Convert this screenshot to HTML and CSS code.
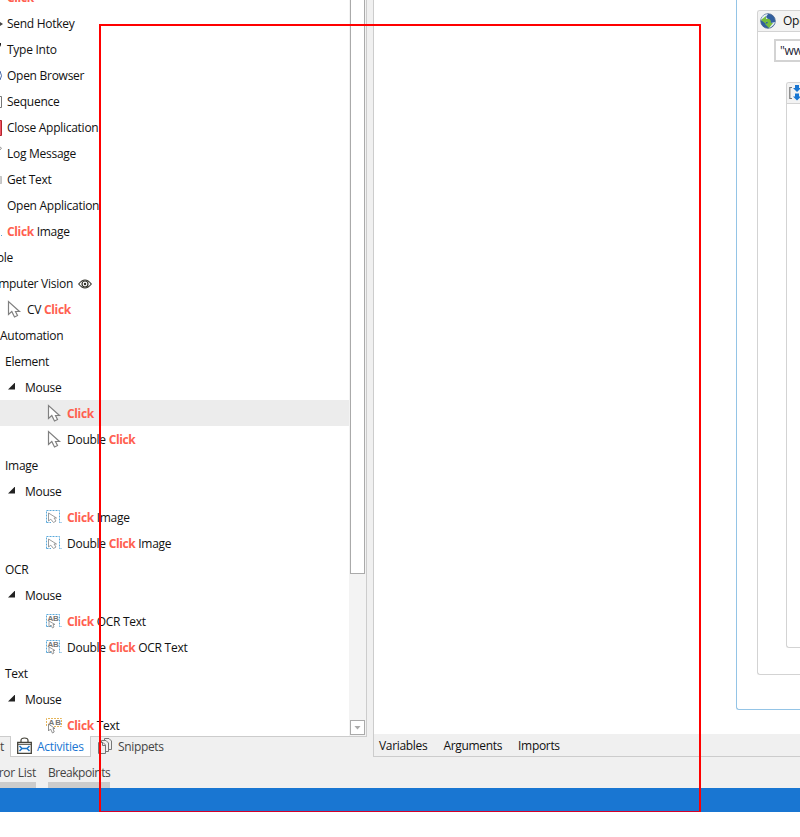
FILE: index.html
```html
<!DOCTYPE html>
<html lang="en">
<head>
<meta charset="utf-8">
<title>Activities</title>
<link rel="stylesheet" href="styles.css">
</head>
<body>
<svg class="defs" width="0" height="0" aria-hidden="true">
  <symbol id="cursor" viewBox="0 0 16 18"><path d="M2.5 1.5V14.5L5.8 11.5L8.5 17L11.5 15.5L9.5 11.5H13.5Z" fill="#fff" stroke="#808080" stroke-width="1.2"/></symbol>
  <symbol id="image" viewBox="0 0 16 18"><path d="M.5 14.5V2.5H13.5V14.5H16M.5 14.5H5" fill="none" stroke="#5aa9da" stroke-dasharray="2 1"/><path d="M2.5 5V13L4.8 11.2L7.5 14.5L10 13L8 10H10.5Z" fill="#fff" stroke="#929292" stroke-width=".9"/></symbol>
  <symbol id="ocr" viewBox="0 0 16 18"><path d="M.5 14.5V2.5H13.5V14.5H16M.5 14.5H5" fill="none" stroke="#5aa9da" stroke-dasharray="2 1"/><text x="1.5" y="9" class="ab">AB</text><path d="M3 9V15L5 13L6.5 16L8 15L7 12.5H9Z" fill="#fff" stroke="#929292" stroke-width=".9"/></symbol>
  <symbol id="text" viewBox="0 0 16 18"><path d="M.5 10V2.5H15.5V10.5H8" fill="none" stroke="#e5b559" stroke-dasharray="2 1"/><text x="2.5" y="9" class="ab wide">AB</text><path d="M2.5 8V15L4.5 13L6.5 17L8.2 16L7 12.5H9Z" fill="#fff" stroke="#858585" stroke-width=".9"/></symbol>
</svg>
<div class="app">
  <main class="work">
    <section class="side">
      <div class="panel">
        <div class="tree">
          <div class="row fav"><span class="ico"></span><b>Click</b></div>
          <div class="row fav"><svg class="ico" viewBox="0 0 7 16"><path d="M0 6L3 8L0 10Z" fill="#444"/></svg><span>Send Hotkey</span></div>
          <div class="row fav"><svg class="ico" viewBox="0 0 7 16"><path d="M0 1H1V3L0 5Z" fill="#222"/></svg><span>Type Into</span></div>
          <div class="row fav"><svg class="ico" viewBox="0 0 7 16"><path d="M0 3Q3 8 0 12" fill="none" stroke="#4668a8"/></svg><span>Open Browser</span></div>
          <div class="row fav"><svg class="ico" viewBox="0 0 7 16"><path d="M0 2.5H1.5V13.5H0" fill="none" stroke="#777"/></svg><span>Sequence</span></div>
          <div class="row fav"><svg class="ico" viewBox="0 0 7 16"><path d="M0 .5H1.5V15.5H0" fill="#ee5363" stroke="#b3252c"/></svg><span>Close Application</span></div>
          <div class="row fav"><svg class="ico" viewBox="0 0 7 16"><path d="M0 1L1.5 2L0 4" fill="none" stroke="#999"/></svg><span>Log Message</span></div>
          <div class="row fav"><svg class="ico" viewBox="0 0 7 16"><path d="M0 4.5H1.5V11.5H0" fill="#ccc" stroke="#c3c3c3"/></svg><span>Get Text</span></div>
          <div class="row fav"><span class="ico"></span><span>Open Application</span></div>
          <div class="row fav"><svg class="ico" viewBox="0 0 7 16"><path d="M1 11.5H2" stroke="#5aa9da"/></svg><span><b>Click</b> Image</span></div>
          <div class="row available"><span>ble</span></div>
          <div class="row vision"><span>Computer Vision</span><svg class="eye" viewBox="0 0 14 10"><path d="M.7 5Q7-3 13.3 5Q7 13 .7 5Z" fill="#fff" stroke="#33332b" stroke-width="1.2"/><circle cx="7" cy="5" r="3" fill="none" stroke="#33332b" stroke-width="1.2"/><circle cx="7" cy="5" r="1.2" fill="#33332b"/></svg></div>
          <div class="row cv"><svg class="tool"><use href="#cursor"/></svg><span>CV <b>Click</b></span></div>
          <div class="row root"><span>Automation</span></div>
          <div class="row group"><span>Element</span></div>
          <div class="row sub"><i class="caret"></i><span>Mouse</span></div>
          <div class="row leaf selected"><svg class="tool"><use href="#cursor"/></svg><b>Click</b></div>
          <div class="row leaf"><svg class="tool"><use href="#cursor"/></svg><span>Double <b>Click</b></span></div>
          <div class="row group"><span>Image</span></div>
          <div class="row sub"><i class="caret"></i><span>Mouse</span></div>
          <div class="row leaf"><svg class="tool"><use href="#image"/></svg><span><b>Click</b> Image</span></div>
          <div class="row leaf"><svg class="tool"><use href="#image"/></svg><span>Double <b>Click</b> Image</span></div>
          <div class="row group"><span>OCR</span></div>
          <div class="row sub"><i class="caret"></i><span>Mouse</span></div>
          <div class="row leaf"><svg class="tool"><use href="#ocr"/></svg><span><b>Click</b> OCR Text</span></div>
          <div class="row leaf"><svg class="tool"><use href="#ocr"/></svg><span>Double <b>Click</b> OCR Text</span></div>
          <div class="row group"><span>Text</span></div>
          <div class="row sub"><i class="caret"></i><span>Mouse</span></div>
          <div class="row leaf"><svg class="tool"><use href="#text"/></svg><span><b>Click</b> Text</span></div>
        </div>
        <div class="scroll"><div class="thumb"></div><div class="down"><i></i></div></div>
      </div>
      <nav class="tabs">
        <div class="tab first"><span>t</span></div>
        <div class="tab active"><svg class="bag" viewBox="0 0 15 17"><path d="M4 6V3.5Q4 1 7.5 1T11 3.5V6" fill="none" stroke="#45433a" stroke-width="1.2"/><path d="M.7 5.5H14.3V16.3H.7Z" fill="#fff" stroke="#45433a" stroke-width="1.3"/><path d="M1 7.5H14" stroke="#45433a" stroke-width=".8"/><path d="M2.5 9L5 11.5L2.5 14M12.5 9L10 11.5L12.5 14M5 11.5H10" fill="none" stroke="#1c75c8" stroke-width="1.5"/></svg><span>Activities</span></div>
        <div class="tab snip"><svg class="pages" viewBox="0 0 14 16"><g fill="#f0f0f0" stroke="#777"><path d="M6.5.5H11L13.5 3V11.5H6.5Z"/><path d="M3.5 2.5H8L10.5 5V13.5H3.5Z"/><path d="M.5 4.5H5L7.5 7V15.5H.5Z"/><path d="M4.5 5V7.5H7"/></g></svg><span>Snippets</span></div>
      </nav>
    </section>
    <section class="designer">
      <div class="canvas">
        <div class="flow">
          <div class="browser">
            <header class="head"><svg class="globe" viewBox="0 0 16 16"><circle cx="8" cy="8" r="7.3" fill="#315f9f" stroke="#48658f" stroke-width=".8"/><path d="M1 6Q3 1 8 1L6 4L9 7L6 9L5 7L2 8Z" fill="#e2edf4"/><path d="M9 15Q14 13 15 9L11 10Z" fill="#e2edf4"/><path d="M1 7L6 3V6Q11 5 11 10H13L9 15L5 11L8 10Q7 8 6 9V11Z" fill="#76bd3b"/></svg><span>Open Browser</span></header>
            <div class="url">"www.google.com"</div>
            <div class="do"><header class="head"><svg class="seq" viewBox="0 0 18 16"><path d="M3 2.5H.8V13.5H3" fill="none" stroke="#777" stroke-width="1.2"/><path d="M6 0H10V3H12L8 7L4 3H6ZM6 8.5H10V11.5H12L8 15.5L4 11.5H6Z" fill="#1976d2"/></svg></header></div>
          </div>
        </div>
      </div>
      <nav class="vars"><span>Variables</span><span>Arguments</span><span>Imports</span></nav>
    </section>
  </main>
  <div class="dock"><div class="errors"><span>Error List</span></div><div class="breaks"><span>Breakpoints</span></div></div>
  <footer class="status"></footer>
  <div class="marker"></div>
</div>
</body>
</html>
```

FILE: styles.css
```css
* { box-sizing: border-box; }
body { margin: 0; background: #fff; font: 12px/16px "Open Sans", "Noto Sans", sans-serif; letter-spacing: -.27px; color: #111; overflow: hidden; }
svg { display: block; flex: none; }
.defs { position: absolute; }
.app { position: relative; width: 800px; height: 812px; overflow: hidden; background: #f0f0f0; display: flex; flex-direction: column; }
.work { display: flex; height: 757px; gap: 6px; }
.side { width: 367px; flex: none; }
.panel { height: 737px; display: flex; border: solid #ccc; border-width: 0 1px 1px 0; background: #fff; overflow: hidden; }
.tree { flex: 1; min-width: 0; margin-top: -16px; }
.row { height: 26px; display: flex; align-items: center; white-space: pre; padding-top: 2px; }
.row span, .row b { flex: none; }
b { color: #ff604f; font-weight: 700; letter-spacing: -.36px; }
.ico { width: 7px; height: 16px; }
.available { width: 13px; justify-content: flex-end; }
.vision { width: 92px; justify-content: flex-end; gap: 5px; }
.eye { width: 14px; height: 10px; }
.tool { width: 16px; height: 18px; margin-right: 5px; margin-top: -2px; }
.cv { padding-left: 6px; }
.group { padding-left: 5px; }
.sub { padding-left: 8px; }
.caret { width: 7px; height: 7px; margin: -4px 10px 0 0; background: #222; clip-path: polygon(100% 0, 100% 100%, 0 100%); }
.leaf { padding-left: 46px; }
.selected { background: #ececec; }
.scroll { width: 17px; background: #f3f3f3; padding: 0 1px 1px; display: flex; flex-direction: column; justify-content: space-between; }
.thumb { width: 15px; height: 574px; background: #fff; border: 1px solid #aaa; border-top: 0; }
.down { width: 15px; height: 15px; background: #fff; border: 1px solid #aaa; display: grid; place-items: center; }
.down i { width: 7px; height: 4px; background: #aaa; clip-path: polygon(0 0, 100% 0, 50% 100%); }
.tabs { height: 21px; margin-top: -1px; display: flex; color: #444; }
.tab { display: flex; align-items: center; height: 21px; white-space: nowrap; }
.first { width: 10px; justify-content: flex-end; padding-right: 6px; }
.active { width: 81px; padding-left: 6px; gap: 5px; border: 1px solid #ccc; border-top: 0; background: #fff; color: #1976d2; }
.active span { padding-top: 1px; }
.bag { width: 15px; height: 17px; margin-top: -2px; }
.snip { padding-left: 7px; gap: 6px; letter-spacing: -.35px; }
.pages { width: 14px; height: 16px; margin-top: -2px; }
.designer { flex: 1; min-width: 0; border: solid #ccc; border-width: 0 0 1px 1px; }
.canvas { height: 734px; background: #fff; padding-left: 362px; overflow: hidden; }
.flow { height: 710px; border: solid #94c4e6; border-width: 0 0 1px 1px; border-radius: 0 0 0 3px; padding: 10px 0 0 20px; }
.browser { height: 665px; border: 1px solid #d3d3d3; border-right: 0; border-radius: 3px 0 0 3px; overflow: hidden; }
.head { height: 21px; display: flex; align-items: center; gap: 7px; padding-left: 2px; background: #f3f3f3; border-bottom: 1px solid #d3d3d3; white-space: nowrap; }
.globe { width: 16px; height: 16px; }
.url { height: 23px; margin: 7px 0 0 16px; border: 2px solid #d3d3d3; border-right: 0; padding: 2px 0 0 4px; white-space: nowrap; color: #223; overflow: hidden; }
.do { margin: 20px 0 0 28px; height: 566px; border: 1px solid #d3d3d3; border-right: 0; border-radius: 3px 0 0 3px; overflow: hidden; }
.seq { width: 18px; height: 16px; }
.vars { height: 22px; display: flex; gap: 16px; align-items: center; padding-left: 5px; padding-top: 2px; letter-spacing: -.32px; }
.dock { height: 31px; display: flex; gap: 12px; color: #444; white-space: nowrap; }
.errors, .breaks { padding-top: 8px; height: 31px; border-bottom: 6px solid #ccc; }
.errors { width: 36px; display: flex; justify-content: flex-end; }
.breaks { width: 62px; letter-spacing: -.45px; }
.status { height: 24px; background: #1976d2; }
.marker { position: absolute; left: 99px; top: 24px; width: 602px; height: 788px; border: 2px solid red; border-bottom: 1px solid #d4002a; }
.ab { font: bold 8px "Liberation Sans", sans-serif; fill: #777; }
.wide { letter-spacing: 1px; }
```
